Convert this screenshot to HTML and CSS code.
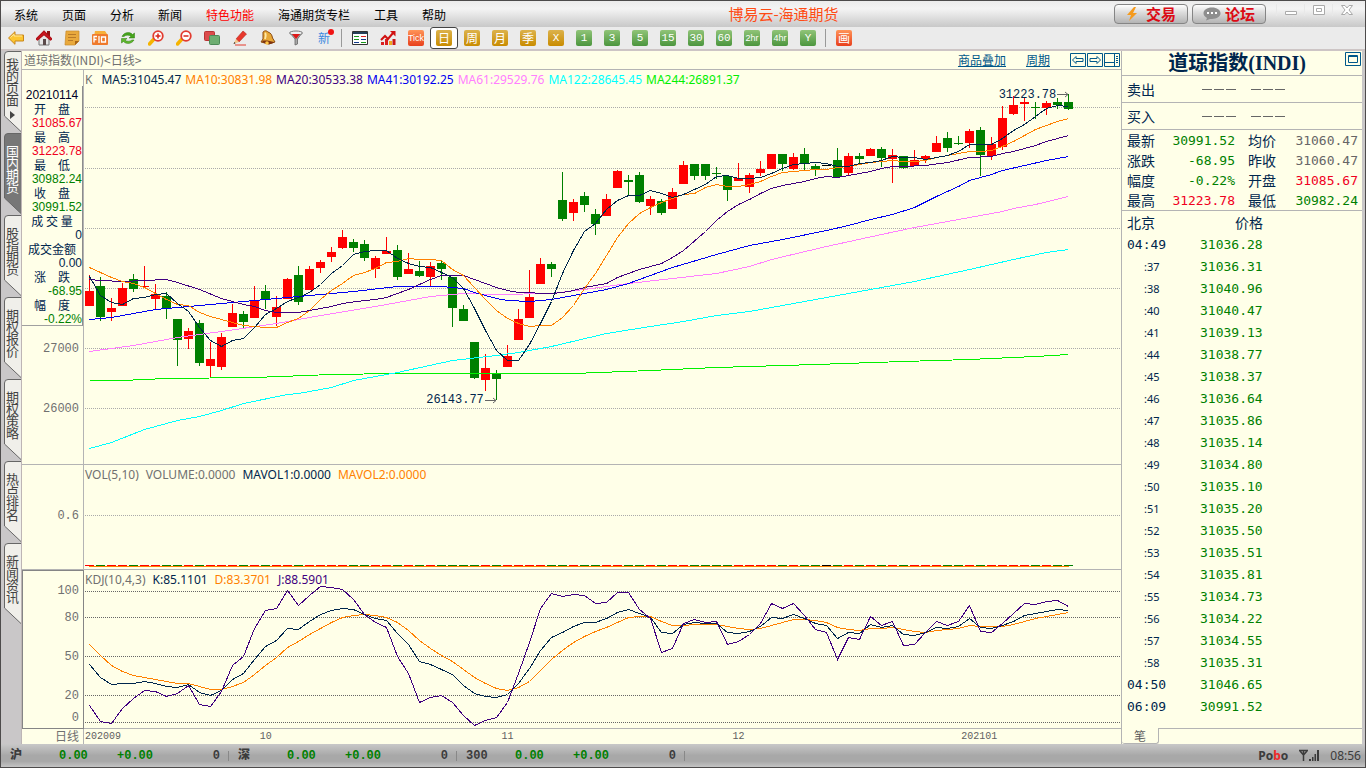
FILE: index.html
```html
<!DOCTYPE html>
<html lang="zh-CN">
<head>
<meta charset="utf-8">
<title>博易云-海通期货</title>
<link rel="stylesheet" href="styles.css">
</head>
<body>
<div class="window">
  <header class="titlebar">
    <nav class="menu">
      <button>系统</button><button>页面</button><button>分析</button><button>新闻</button><button class="hot">特色功能</button><button>海通期货专栏</button><button>工具</button><button>帮助</button>
    </nav>
    <h1 class="app-title">博易云-海通期货</h1>
    <div class="title-actions">
      <button class="pill"><svg width="12" height="16" viewBox="0 0 12 16"><path d="M8 1 1 9h4L3 15l8-8H7l3-6z" fill="#f59a1c"/></svg>交易</button>
      <button class="pill"><svg width="18" height="14" viewBox="0 0 18 14"><path d="M9 .5C4 .5.5 3 .5 6.300c0 2 1.500 3.700 3.500 4.700L3 13.500l4-1.600h2c5 0 8.500-2.300 8.500-5.600S14 .5 9 .5z" fill="#8e8e8e"/><path d="M4 5h2v2H4zM8 5h2v2H8zM12 5h2v2h-2z" fill="#fff"/></svg>论坛</button>
      <div class="win-buttons">
        <button aria-label="最小化"><svg width="14" height="12" viewBox="0 0 14 12"><path d="M1.500 7.500h11v3h-11z" fill="#fff" stroke="#aaa"/></svg></button>
        <button aria-label="最大化"><svg width="14" height="12" viewBox="0 0 14 12"><path d="M1.500 1.500h11v9h-11zM4.500 4.500h5v3h-5z" fill="#fff" stroke="#aaa"/></svg></button>
        <button aria-label="关闭"><svg width="14" height="12" viewBox="0 0 14 12"><path d="M1.500 1.500h3.500l2 2.500 2-2.500h3.500L9 6l3.500 4.500H9L7 8l-2 2.500H1.500L5 6z" fill="#fff" stroke="#aaa"/></svg></button>
      </div>
    </div>
  </header>

  <div class="toolbar" role="toolbar">
    <button aria-label="后退"><svg class="ico" viewBox="0 0 16 16"><path d="M.5 8 7 1.700V5h8.500v6H7v3.300z" fill="#fcc631" stroke="#c9861a"/><path d="M2.500 7.500 6 4.200V6h8" stroke="#ffe89a" fill="none"/></svg></button>
    <button aria-label="首页"><svg class="ico" viewBox="0 0 16 16"><path d="M3 8v7h10V8L8 3z" fill="#e6e6e6" stroke="#777"/><path d="M11 1h3v5h-3z" fill="#8e1414"/><path d="M0 9 8 1l8 8-1.500 1L8 4.500 1.500 10z" fill="#d01820" stroke="#b01018" stroke-width="1.200"/><path d="M7 9h3v6H7z" fill="#5a4a4a"/></svg></button>
    <button aria-label="笔记"><svg class="ico" viewBox="0 0 16 16"><path d="M2 1h13v10l-4 4H1z" fill="#e9a93c" stroke="#c98a2a" stroke-width=".7"/><path d="m15 11-4 4v-4z" fill="#a86414"/><path d="M4 4.500h8M4 7.500h8M4 10.500h5" stroke="#b87a28"/></svg></button>
    <button aria-label="F10"><svg class="ico" viewBox="0 0 16 16"><path d="M3 1h10l2 3v11H3L1 12z" fill="#f7b03a"/><rect x="0" y="4" width="16" height="11" rx="1" fill="#ef7a2c"/><path d="M2 12.500v-6h3M2 9.500h2.500M7 6v7M9.500 7h4v5h-4z" stroke="#fff" stroke-width="1.300" fill="none"/></svg></button>
    <button aria-label="刷新"><svg class="ico" viewBox="0 0 16 16"><path d="M2 6.500C4 2 10 1.500 12.500 4.500l2-1.500v5H9l2-1.800C9 4.500 5.500 5 4 6.500z" fill="#46a51c" stroke="#2c7a10" stroke-width=".5"/><path d="M14 10c-2 4-8 4.500-10.500 1.500l-2 1.500V8.500H7l-2 1.800c2 1.500 5.500 1 7-.3z" fill="#5fb82c" stroke="#2c7a10" stroke-width=".5"/></svg></button>
    <button aria-label="放大"><svg class="ico" viewBox="0 0 16 16"><path d="m6 9-4.500 5" stroke="#f5b400" stroke-width="3.500" stroke-linecap="round"/><circle cx="10" cy="6" r="4.800" fill="#fff" stroke="#e23c30" stroke-width="1.800"/><path d="M7.500 6h5M10 3.500v5" stroke="#d8261c" stroke-width="1.500"/></svg></button>
    <button aria-label="缩小"><svg class="ico" viewBox="0 0 16 16"><path d="m6 9-4.500 5" stroke="#f5b400" stroke-width="3.500" stroke-linecap="round"/><circle cx="10" cy="6" r="4.800" fill="#fff" stroke="#e23c30" stroke-width="1.800"/><path d="M7.500 6h5" stroke="#d8261c" stroke-width="1.500"/></svg></button>
    <button aria-label="叠加"><svg class="ico" viewBox="0 0 16 16"><rect x=".5" y="1.500" width="10" height="9" rx="1" fill="#dc4b4b" stroke="#b83434"/><rect x="5.500" y="5.500" width="10" height="9" rx="1" fill="#6eae72" stroke="#4d8a58"/></svg></button>
    <button aria-label="画线"><svg class="ico" viewBox="0 0 16 16"><path d="M4 9 11 1l3.500 3L7 12z" fill="#e8382c" stroke="#b3261c" stroke-width=".6"/><path d="M4 9 1.500 14 7 12z" fill="#f3c68c"/><path d="m2.500 12-1 2 2-.8z" fill="#222"/><path d="M3 15h11" stroke="#e43a2c"/></svg></button>
    <button aria-label="预警"><svg class="ico" viewBox="0 0 16 16"><path d="M3 2c2-2 4-1 5 0 3 1 4 3 4.500 6l2.500 4-6 2-8-2 2-3z" fill="#e8a838" stroke="#8a4a10"/><path d="M5 3c1 1 1 3 0 6" stroke="#ffe9a8" fill="none" stroke-width="1.800"/><path d="M2 11c3-1 8 0 12 1-2 3-10 3-12-1z" fill="#7e3410"/><circle cx="7" cy="13" r="1.800" fill="#ffc84a"/></svg></button>
    <button aria-label="筛选"><svg class="ico" viewBox="0 0 16 16"><path d="M2 3 7 9v6l2.500-1V9L14 3z" fill="#a8a8a8" stroke="#666" stroke-width=".8"/><ellipse cx="8" cy="3" rx="6.500" ry="2" fill="#eee" stroke="#777"/><path d="M4 4h8L8 9z" fill="#e01818"/></svg></button>
    <button class="new-btn">新<span class="dot"></span></button>
    <span class="sep"></span>
    <button aria-label="报价表"><svg class="ico" viewBox="0 0 16 16"><path d="M.5 1.500h15v13H.5z" fill="#fff" stroke="#333"/><path d="M1 2h14v2H1z" fill="#274058"/><path d="M2 6.500h5M2 9.500h5M9 12.500h5" stroke="#1a9a1a"/><path d="M9 6.500h5" stroke="#d22"/><path d="M9 9.500h5M2 12.500h5" stroke="#113a8a"/></svg></button>
    <button aria-label="走势图"><svg class="ico" viewBox="0 0 16 16"><path d="M1 12h3v3H1zM5 9h3v6H5z" fill="#da2020"/><path d="M9 11h3v4H9z" fill="#f0a820"/><path d="M12.500 9h3v6h-3z" fill="#c81818"/><path d="m1 10 4-4 3 3 5-6" stroke="#d01010" stroke-width="2" fill="none"/><path d="M10 1h5.500v5.500z" fill="#d01010"/></svg></button>
    <button class="t"><span class="tile red">Tick</span></button>
    <button class="t on"><span class="tile gold big">日</span></button>
    <button class="t"><span class="tile gold big">周</span></button>
    <button class="t"><span class="tile gold big">月</span></button>
    <button class="t"><span class="tile gold big">季</span></button>
    <button class="t"><span class="tile gold">X</span></button>
    <button class="t"><span class="tile green">1</span></button>
    <button class="t"><span class="tile green">3</span></button>
    <button class="t"><span class="tile green">5</span></button>
    <button class="t"><span class="tile green">15</span></button>
    <button class="t"><span class="tile green">30</span></button>
    <button class="t"><span class="tile green">60</span></button>
    <button class="t"><span class="tile green small">2hr</span></button>
    <button class="t"><span class="tile green small">4hr</span></button>
    <button class="t"><span class="tile green">Y</span></button>
    <span class="sep"></span>
    <button class="t"><span class="tile red big">画</span></button>
  </div>

  <main class="main">
    <nav class="side">
      <button class="first"><svg viewBox="0 0 17 82"><path d="M18 .5H4Q.5 .5 .5 4V65L17.500 81"/></svg><span>我的页面</span><i></i></button>
      <button class="active"><svg viewBox="0 0 17 82"><path d="M18 .5H4Q.5 .5 .5 4V65L17.500 81"/></svg><span>国内期货</span></button>
      <button><svg viewBox="0 0 17 82"><path d="M18 .5H4Q.5 .5 .5 4V65L17.500 81"/></svg><span>股指期货</span></button>
      <button><svg viewBox="0 0 17 82"><path d="M18 .5H4Q.5 .5 .5 4V65L17.500 81"/></svg><span>期权报价</span></button>
      <button><svg viewBox="0 0 17 82"><path d="M18 .5H4Q.5 .5 .5 4V65L17.500 81"/></svg><span>期权策略</span></button>
      <button><svg viewBox="0 0 17 82"><path d="M18 .5H4Q.5 .5 .5 4V65L17.500 81"/></svg><span>热点排名</span></button>
      <button><svg viewBox="0 0 17 82"><path d="M18 .5H4Q.5 .5 .5 4V65L17.500 81"/></svg><span>新闻资讯</span></button>
    </nav>

    <section class="charts">
      <div class="chart-head">
        <span>道琼指数(INDI)&lt;日线&gt;</span>
        <div class="head-links">
          <a href="#">商品叠加</a><a href="#">周期</a>
          <div class="head-icons">
            <button aria-label="左移"><svg width="16" height="14" viewBox="0 0 16 14"><path d="M.5.5h15v13H.5zM2.500 7 6 3.500v2h7v3H6v2z"/></svg></button>
            <button aria-label="右移"><svg width="16" height="14" viewBox="0 0 16 14"><path d="M.5.5h15v13H.5zM13.500 7 10 3.500v2H3v3h7v2z"/></svg></button>
            <button aria-label="布局"><svg width="16" height="14" viewBox="0 0 16 14"><path d="M.5.5h15v13H.5zM10.500 1v12M1 9.500h9M12 3.500h2M12 5.500h2M12 7.500h2M12 9.500h2"/></svg></button>
          </div>
        </div>
      </div>

      <div class="axis k-axis">
        <dl class="day">
          <dt class="date">20210114</dt>
          <dt>开　盘</dt><dd class="up">31085.67</dd>
          <dt>最　高</dt><dd class="up">31223.78</dd>
          <dt>最　低</dt><dd class="down">30982.24</dd>
          <dt>收　盘</dt><dd class="down">30991.52</dd>
          <dt>成 交 量</dt><dd>0</dd>
          <dt>成交金额</dt><dd>0.00</dd>
          <dt>涨　跌</dt><dd class="down">-68.95</dd>
          <dt>幅　度</dt><dd class="down">-0.22%</dd>
        </dl>
        <span class="tick t27000">27000</span><span class="tick t26000">26000</span>
      </div>
      <div class="pane">
        <svg id="k-chart" class="plot" viewBox="84 70 1037 394" preserveAspectRatio="none"></svg>
        <p class="legend"><span class="c-gray k">K</span><span class="c-ma5">MA5:31045.47</span><span class="c-ma10">MA10:30831.98</span><span class="c-ma20">MA20:30533.38</span><span class="c-ma41">MA41:30192.25</span><span class="c-ma61">MA61:29529.76</span><span class="c-ma122">MA122:28645.45</span><span class="c-ma244">MA244:26891.37</span></p>
        <span class="mark high">31223.78<svg width="12" height="7" viewBox="0 0 12 7"><path d="M0 3.500h11M8 1l3 2.500L8 6"/></svg></span>
        <span class="mark low">26143.77<svg width="12" height="7" viewBox="0 0 12 7"><path d="M0 3.500h11M8 1l3 2.500L8 6"/></svg></span>
      </div>

      <div class="axis vol-axis"><span class="tick t06">0.6</span></div>
      <div class="pane">
        <svg id="vol-chart" class="plot" viewBox="84 465 1037 104" preserveAspectRatio="none"></svg>
        <p class="legend wide"><span class="c-gray">VOL(5,10)</span><span class="c-gray">VOLUME:0.0000</span><span class="c-ma5">MAVOL1:0.0000</span><span class="c-ma10">MAVOL2:0.0000</span></p>
      </div>

      <div class="axis kdj-axis"><span class="tick t100">100</span><span class="tick t80">80</span><span class="tick t50">50</span><span class="tick t20">20</span><span class="tick t0">0</span></div>
      <div class="pane">
        <svg id="kdj-chart" class="plot" viewBox="84 570 1037 158" preserveAspectRatio="none"></svg>
        <p class="legend wide"><span class="c-gray">KDJ(10,4,3)</span><span class="c-ma5">K:85.1101</span><span class="c-ma10">D:83.3701</span><span class="c-ma20">J:88.5901</span></p>
      </div>

      <div class="axis foot-axis">日线</div>
      <div class="dates"><span>202009</span><span>10</span><span>11</span><span>12</span><span>202101</span></div>
    </section>

    <aside class="quote">
      <div class="quote-title"><h2>道琼指数(INDI)</h2><button aria-label="最大化面板"><svg width="16" height="14" viewBox="0 0 16 14"><path d="M.5.5h15v13H.5zM3.500 3.500h9v7h-9zM3.500 4.500h9"/></svg></button></div>
      <div class="order"><span>卖出</span><span class="dashes"><i></i><i></i><i></i></span><span class="dashes"><i></i><i></i><i></i></span></div>
      <div class="order"><span>买入</span><span class="dashes"><i></i><i></i><i></i></span><span class="dashes"><i></i><i></i><i></i></span></div>
      <table class="stats">
        <tr><th>最新</th><td class="down">30991.52</td><th>均价</th><td>31060.47</td></tr>
        <tr><th>涨跌</th><td class="down">-68.95</td><th>昨收</th><td>31060.47</td></tr>
        <tr><th>幅度</th><td class="down">-0.22%</td><th>开盘</th><td class="up">31085.67</td></tr>
        <tr><th>最高</th><td class="up">31223.78</td><th>最低</th><td class="down">30982.24</td></tr>
      </table>
      <table class="ticks">
        <thead><tr><th>北京</th><th class="price-head">价格</th></tr></thead>
        <tbody>
          <tr><td>04:49</td><td>31036.28</td></tr>
          <tr><td class="s">:37</td><td>31036.31</td></tr>
          <tr><td class="s">:38</td><td>31040.96</td></tr>
          <tr><td class="s">:40</td><td>31040.47</td></tr>
          <tr><td class="s">:41</td><td>31039.13</td></tr>
          <tr><td class="s">:44</td><td>31038.77</td></tr>
          <tr><td class="s">:45</td><td>31038.37</td></tr>
          <tr><td class="s">:46</td><td>31036.64</td></tr>
          <tr><td class="s">:47</td><td>31035.86</td></tr>
          <tr><td class="s">:48</td><td>31035.14</td></tr>
          <tr><td class="s">:49</td><td>31034.80</td></tr>
          <tr><td class="s">:50</td><td>31035.10</td></tr>
          <tr><td class="s">:51</td><td>31035.20</td></tr>
          <tr><td class="s">:52</td><td>31035.50</td></tr>
          <tr><td class="s">:53</td><td>31035.51</td></tr>
          <tr><td class="s">:54</td><td>31035.81</td></tr>
          <tr><td class="s">:55</td><td>31034.73</td></tr>
          <tr><td class="s">:56</td><td>31034.22</td></tr>
          <tr><td class="s">:57</td><td>31034.55</td></tr>
          <tr><td class="s">:58</td><td>31035.31</td></tr>
          <tr><td>04:50</td><td>31046.65</td></tr>
          <tr><td>06:09</td><td>30991.52</td></tr>
        </tbody>
      </table>
      <div class="quote-tabs"><button>笔</button><span></span></div>
    </aside>
  </main>

  <footer class="status">
    <div class="index"><b>沪</b><span class="down">0.00</span><span class="down">+0.00</span><span>0</span></div>
    <div class="index"><b>深</b><span class="down">0.00</span><span class="down">+0.00</span><span>0</span></div>
    <div class="index"><b>300</b><span class="down">0.00</span><span class="down">+0.00</span><span>0</span></div>
    <div class="tray">
      <span class="brand">Po<em>b</em>o</span>
      <svg width="22" height="14" viewBox="0 0 22 14"><path d="M1 1.500h9M2 2l3.500 4L9 2M5.500 1v11" fill="none" stroke="#3c3c3c" stroke-width="1.500"/><path d="M11 10h2v2h-2zM14 8h1.500v4H14zM16.500 5H18v7h-1.500zM19 1h2v11h-2z" fill="#3c3c3c"/></svg>
      <time>08:56</time>
    </div>
  </footer>
</div>
<script src="charts.js"></script>
</body>
</html>
```
FILE: styles.css
```css
* { box-sizing: border-box; }
body { margin: 0; font: 12px/14px "Noto Sans CJK SC", sans-serif; color: #00264d; background: #fffee8; }
button { margin: 0; padding: 0; border: 0; background: none; font: inherit; color: inherit; }
p, h1, h2, dl, dd { margin: 0; }
a { color: #00588a; text-decoration: underline; }

.window { display: flex; flex-direction: column; min-height: 100vh; border: 1px solid #4d4b4b; background: #c9c7c8; }
.up { color: #f0001e; }
.down { color: #008000; }

.titlebar { display: grid; grid-template-columns: 1fr auto 1fr; height: 26px; padding-left: 13px; background: linear-gradient(#ececec, #f4f4f4 30%, #c8c8c8); color: #000; }
.menu { display: flex; gap: 24px; align-items: center; padding-top: 2px; white-space: nowrap; }
.menu .hot { color: #f00; }
.app-title { align-self: center; padding-left: 188px; font-size: 15px; line-height: 20px; font-weight: 400; color: #ff4b14; white-space: nowrap; }
.title-actions { display: flex; justify-content: flex-end; gap: 4px; padding: 3px 5px 0 0; align-items: flex-start; }
.pill { display: flex; align-items: center; justify-content: center; gap: 8px; width: 74px; height: 20px; border: 1px solid #858585; border-radius: 4px; background: linear-gradient(#fff, #ddd 40%, #b4b4b4); color: #dc0a14; font-size: 15px; font-weight: 700; }
.pill svg { flex: none; }
.pill:nth-child(2) { gap: 4px; }
.win-buttons { display: flex; padding-left: 6px; }
.win-buttons button { width: 28px; height: 12px; border-left: 1px solid #e8e8e8; }

.toolbar { display: flex; height: 24px; padding-left: 1px; border-bottom: 2px solid #cdc5c5; background: #ebebeb; }
.toolbar button { display: flex; align-items: center; justify-content: center; width: 28px; height: 22px; flex: none; }
.toolbar .sep { width: 1px; height: 18px; margin: 2px 4px 0 3px; background: #999; }
.ico { width: 16px; height: 16px; }
.new-btn { position: relative; color: #3c8ae0; }
.dot { position: absolute; top: 2px; right: 4px; width: 6px; height: 6px; border-radius: 50%; background: #f01414; }
.toolbar .on { border: 1px solid #444; border-radius: 3px; background: #fff; }
.tile { display: flex; align-items: center; justify-content: center; width: 16px; height: 16px; border-radius: 2px; color: #fff; font: 11px/16px "Liberation Mono", monospace; }
.tile.big { font: 12px/16px "Noto Sans CJK SC", sans-serif; }
.tile.small { font: 9px/16px "Liberation Sans", sans-serif; }
.gold { background: linear-gradient(#dcb24c, #c98c00); }
.green { background: linear-gradient(#90c478, #4c963e); }
.red { background: linear-gradient(#ff9458, #e8401c); font: 9px/16px "Liberation Sans", sans-serif; }

.main { flex: 1; display: grid; grid-template-columns: 21px minmax(0, 1fr) 241px; padding-right: 3px; }

.side { display: flex; flex-direction: column; padding-left: 3px; border-right: 1px solid #bdb5b5; color: #444; }
.side button { position: relative; display: flex; flex-direction: column; align-items: center; height: 82px; padding-top: 12px; }
.side svg { position: absolute; left: 0; top: 0; width: 17px; height: 82px; fill: #f0efea; stroke: #666; }
.side span { position: relative; width: 13px; line-height: 12px; font-size: 13px; word-break: break-all; }
.side .first { padding-top: 7px; }
.side i { position: relative; margin-top: 5px; border: 4px solid transparent; border-left: 5px solid #444; border-right: 0; }
.side .active { color: #fff; }
.side .active svg { fill: #777; }

.charts { display: grid; grid-template-columns: 62px minmax(0, 1fr); grid-template-rows: 19px minmax(0, 395fr) minmax(0, 105fr) minmax(0, 159fr) 15px; background: #ffffe8; }
.chart-head { grid-column: 1 / 3; display: flex; justify-content: space-between; align-items: center; padding: 0 1px 0 2px; border-bottom: 1px solid #b4b4b4; color: #707070; }
.head-links { display: flex; gap: 20px; align-items: center; }
.head-icons { display: flex; gap: 1px; }
.head-icons button, .quote-title button { display: flex; }
.head-icons svg, .quote-title svg { fill: none; stroke: #00588a; }

.axis { position: relative; border-right: 1px solid #b4b4b4; border-bottom: 1px solid #b4b4b4; color: #707070; }
.pane { position: relative; border-bottom: 1px solid #b4b4b4; }
.plot { display: block; position: absolute; inset: 0; width: 100%; height: 100%; shape-rendering: crispEdges; }
.day { margin-top: 16px; padding-top: 2px; height: 240px; border-right: 1px solid #8c8c8c; border-bottom: 1px solid #a0a0a0; color: #00264d; text-align: center; }
.day dt, .day dd { height: 14px; }
.day dd { text-align: right; font: 12px/14px "Liberation Sans", sans-serif; }
.day dd:not(.up, .down) { color: #00264d; }
.day .date { color: #000028; font: 12px/14px "Liberation Sans", sans-serif; }
.tick { position: absolute; right: 4px; margin-top: -6px; font: 12px/14px "Liberation Mono", monospace; }
.t27000 { top: 70.500%; }
.t26000 { top: 85.800%; }
.t06 { top: 48%; }
.t100 { top: 12%; }
.t80 { top: 29%; }
.t50 { top: 54%; }
.t20 { top: 79%; }
.t0 { top: 93%; }
.kdj-axis { border: 1px solid #858585; }
.kdj-axis .tick { right: 4px; }

.legend { position: relative; display: flex; gap: 4px; padding: 3px 0 0 1px; font: 12px/14px "Noto Sans", sans-serif; white-space: nowrap; }
.legend.wide { gap: 7px; }
.legend .k { padding-right: 5px; }
.c-gray { color: #707070; }
.c-ma5 { color: #00264d; }
.c-ma10 { color: #ff8000; }
.c-ma20 { color: #400080; }
.c-ma41 { color: #0000f0; }
.c-ma61 { color: #ff80ff; }
.c-ma122 { color: #00ffff; }
.c-ma244 { color: #00f000; }
.mark { position: absolute; display: flex; align-items: center; gap: 1px; font: 12px/14px "Liberation Mono", monospace; }
.mark svg { fill: none; stroke: #666; }
.mark.high { left: 88.200%; top: 4.500%; }
.mark.low { left: 33%; top: 82%; }
.plot rect { stroke: none; }
.plot line, .plot polyline { vector-effect: non-scaling-stroke; fill: none; stroke-width: 1; }
.foot-axis { padding-right: 4px; text-align: right; border-bottom: 0; }
.dates { display: grid; grid-template-columns: 175fr 242fr 231fr 229fr 160fr; padding-left: 1px; font: 10px/15px "Liberation Mono", monospace; color: #606060; }

.quote { display: flex; flex-direction: column; border-left: 1px solid #b4b4b4; background: #ffffe8; font-size: 14px; }
.quote-title { display: flex; justify-content: flex-end; align-items: flex-start; gap: 39px; height: 25px; padding: 1px 1px 0 0; border-bottom: 1px solid #b4b4b4; }
.quote-title h2 { font: 700 20px/22px "Liberation Serif", "Noto Sans CJK SC", serif; white-space: nowrap; }
.order { display: flex; align-items: center; height: 27px; padding-left: 5px; border-bottom: 1px solid #b4b4b4; }
.dashes { display: flex; gap: 2px; margin-left: 47px; }
.dashes + .dashes { margin-left: 15px; }
.dashes i { width: 10px; height: 1px; background: #666; }
table { border-collapse: collapse; }
th { padding: 0; font-weight: 400; text-align: left; }
td { padding: 2px 0 0; font: 13px/18px "DejaVu Sans Mono", monospace; }
.stats { width: 100%; border-bottom: 1px solid #b4b4b4; table-layout: fixed; }
.stats tr { height: 20px; }
.stats th { width: 41px; padding-left: 5px; line-height: 20px; }
.stats th:nth-child(3) { width: 49px; padding-left: 13px; }
.stats td { text-align: right; }
.stats td:nth-child(2) { width: 72px; }
.stats td:last-child { padding-right: 4px; }
.stats td:not(.up, .down) { color: #666; }
.ticks { width: 100%; table-layout: fixed; }
.ticks tr { height: 22px; }
.ticks th { line-height: 22px; padding-left: 5px; width: 78px; }
.ticks .price-head { width: auto; padding-left: 35px; }
.ticks td { padding-left: 5px; line-height: 20px; }
.ticks td:last-child { padding-left: 0; color: #008000; }
.ticks .s { padding-left: 22px; font: 11px/20px "Noto Sans", sans-serif; }
.quote-tabs { display: flex; height: 16px; margin-top: auto; color: #606060; }
.quote-tabs button { width: 37px; height: 16px; border-right: 1px solid #b4b4b4; border-bottom: 1px solid #b4b4b4; border-radius: 0 0 3px 3px; font-size: 12px; }
.quote-tabs span { flex: 1; border-top: 1px solid #b4b4b4; }

.status { display: flex; height: 23px; background: linear-gradient(#c8c8c8, #a8a8a8 50%, #a8a8a8 75%, #c4c4c4); color: #3c3c3c; font: 700 12px/25px "Liberation Mono", "Noto Sans CJK SC", monospace; }
.index { position: relative; display: grid; grid-template-columns: 49px 58px 62px 1fr; width: 228px; padding: 0 9px 0 9px; flex: none; }
.index span:last-child { text-align: right; }
.index::after { content: ""; position: absolute; right: 0; top: 7px; width: 1px; height: 10px; background: #888; }
.tray { display: flex; align-items: center; gap: 10px; margin-left: auto; padding-right: 4px; font: 12px/23px "Noto Sans", sans-serif; }
.brand { font-weight: 700; }
.brand em { font-style: normal; color: #f02828; }
```
FILE: charts.js
```js
// Each bar: direction (r rise, g fall, n flat), high, body top, body bottom, low.
const bars = `r275,291,306,306 g277,286,317,321 r298,308,312,321 r283,288,306,306 g274,279,289,292 r266,286,287,287
r284,294,299,309 g292,296,309,319 g319,319,340,366 r328,331,339,349 g320,323,363,366 r342,359,366,377 r333,337,367,370
r304,313,327,327 g311,314,322,329 r286,301,318,318 g285,291,300,309 r296,307,317,326 r278,279,299,299 g266,275,302,305
r266,269,290,290 r260,262,268,273 r247,252,257,262 r230,237,248,249 g239,242,248,252 g240,244,258,261 r256,258,269,278
r237,251,254,254 g245,250,277,280 r253,269,274,274 g261,271,276,277 r262,266,277,286 g260,263,269,280 g277,277,308,327
g305,309,321,321 g342,342,378,379 r354,368,380,391 g370,374,379,400 r345,356,367,367 r309,319,340,340 r270,297,318,318
r258,264,284,284 g262,264,269,277 g172,200,219,221 r199,202,213,221 g192,196,205,212 g209,214,224,235 r194,199,216,216
r170,171,188,188 g175,180,182,196 g172,175,202,203 r196,199,206,215 g199,201,213,215 r188,192,209,209 r161,165,184,184
g164,164,176,180 g164,164,176,180 g167,173,174,179 g176,176,190,201 r163,178,181,181 r173,175,187,193 r161,169,173,176
r154,154,169,169 g154,154,164,171 r153,157,169,170 g148,154,164,170 g164,166,169,176 n165,165,166,166 g148,160,177,177
r153,156,173,175 g153,156,159,163 r148,149,156,156 g147,149,158,167 r149,155,159,183 g156,156,168,169 r150,160,166,166
r155,156,159,163 r136,143,152,152 g132,138,148,152 g136,143,144,145 r129,131,143,148 g127,130,155,176 r137,144,156,160
r106,118,147,150 r96,105,114,115 r98,102,104,121 g102,107,108,119 r101,103,108,115 g98,102,105,109 g94,102,109,110`
  .split(/\s+/).map(s => ({ dir: s[0], v: s.slice(1).split(",").map(Number) }));

const fill = { r: "#ff0000", g: "#008000", n: "#000000" };
const NAVY = "#00264d", ORANGE = "#ff8000", PURPLE = "#400080";
const barX = i => 89 + 11 * i;

// One value for every bar.
const dense = list => list.trim().split(/\s+/).map((y, i) => [i, +y]);
// "bar:value" pairs for slowly changing averages.
const sparse = list => list.trim().split(/\s+/).map(p => p.split(":").map(Number));

function add(svg, name, attrs) {
  const el = document.createElementNS("http://www.w3.org/2000/svg", name);
  for (const key in attrs) el.setAttribute(key, attrs[key]);
  svg.appendChild(el);
}
function rect(svg, x, y, width, height, color) {
  add(svg, "rect", { x, y, width, height, fill: color });
}
function grid(svg, levels, color) {
  levels.forEach(y => add(svg, "line", { x1: 85, x2: 1121, y1: y + .5, y2: y + .5, stroke: color, "stroke-dasharray": "1 1" }));
}
function curve(svg, points, color) {
  add(svg, "polyline", { points: points.map(([i, y]) => `${barX(i) + .5},${y + .5}`).join(" "), stroke: color });
}

const k = document.getElementById("k-chart");
grid(k, [107, 168, 228, 288, 348, 408], "#aaaaaa");
bars.forEach(({ dir, v: [high, top, bottom, low] }, i) => {
  rect(k, barX(i), high, 1, low - high, fill[dir]);
  rect(k, barX(i) - 4, top, 9, bottom - top, fill[dir]);
});
curve(k, sparse("0:380 3:380 7:378 15:377 22:374 28:373 37:373 44:373 51:370 57:367 66:364 74:361 80:359 86:356 89:354"), "#00f000");
curve(k, sparse("0:448 2:442 5:429 8:420 10:416 12:410 14:403 18:394 19:393 22:387 24:380 28:372 33:360 37:355 39:352 42:346 47:333 51:326 54:321 57:315 60:311 65:301 70:291 75:281 80:269 84:259 87:252 89:249"), "#00ffff");
curve(k, sparse("0:351 4:345 8:337 12:331 17:323 20:317 26:306 31:296 34:293 37:294 42:293 45:289 47:286 49:283 53:278 57:273 60:266 62:259 67:246 72:234 75:227 81:215 83:211 84:208 86:204 89:196"), "#ff80ff");
curve(k, sparse("0:319 2:317 6:309 12:303 15:300 19:296 24:291 28:286 32:286 34:288 35:292 37:298 38:300 40:301 42:299 47:289 49:283 53:267 57:254 60:245 63:239 67:230 69:225 71:219 73:214 75:207 77:196 79:186 80:180 82:174 83:170 87:160 89:156"), "#0000f0");
curve(k, sparse("0:279 1:280 3:281 5:280 7:279 8:282 10:289 12:298 14:304 15:306 16:310 17:312 19:312 20:310 21:308 22:306 23:303 25:300 26:299 27:297 29:289 31:279 32:275 34:275 35:279 36:283 37:287 38:290 39:292 42:293 43:292 44:290 45:287 47:283 48:277 50:269 52:263 53:257 54:250 56:231 57:220 58:211 59:204 60:199 61:193 62:188 63:185 65:181 66:178 67:176 68:177 69:175 71:171 72:168 73:166 74:166 76:165 78:162 80:157 82:156 83:153 84:151 86:145 87:141 89:135"), PURPLE);
curve(k, dense("267 272 277 281 283 287 293 299 304 305 312 316 319 322 325 326 327 327 322 318 310 299 290 283 275 272 268 262 261 258 259 259 260 269 275 287 299 310 318 323 326 325 325 317 305 288 273 255 237 223 213 207 202 198 194 193 187 184 186 186 184 181 176 172 171 170 169 169 167 166 164 162 161 160 161 161 160 157 155 153 151 151 150 146 141 135 129 125 121 118"), ORANGE);
curve(k, dense("276 295 302 304 298 297 294 293 303 311 327 340 346 340 338 327 314 308 301 297 292 284 273 265 254 251 250 250 258 263 266 267 272 277 288 308 330 350 360 360 344 323 301 273 250 231 223 209 200 195 195 190 193 197 194 189 184 176 175 178 178 177 173 168 164 163 162 163 166 166 163 162 160 156 157 157 159 157 155 151 144 144 144 138 130 124 116 108 105 106"), NAVY);

const vol = document.getElementById("vol-chart");
grid(vol, [515], "#aaaaaa");
bars.forEach(({ dir }, i) => rect(vol, barX(i) - 4, 565, 9, 1, fill[dir]));
rect(vol, 89, 566, 980, 1, ORANGE);

const kdj = document.getElementById("kdj-chart");
grid(kdj, [591, 617, 656, 695, 722], "#666666");
curve(kdj, dense("644 655 665 671 675 677 679 681 683 683 686 689 689 686 682 674 665 657 647 641 634 628 622 617 615 614 615 617 622 630 640 648 655 661 669 677 683 688 690 687 681 670 659 650 642 636 631 627 622 617 616 616 621 625 625 624 624 624 626 628 629 628 625 622 619 619 620 622 627 629 630 628 628 627 629 631 632 630 629 628 625 626 626 626 624 621 618 616 614 612"), ORANGE);
curve(kdj, dense("664 677 684 683 683 681 683 686 687 684 692 695 690 679 673 659 646 640 628 629 621 614 610 608 609 614 618 620 633 644 661 664 669 674 685 693 696 697 694 683 668 650 637 632 626 622 622 618 612 609 613 617 632 633 624 622 623 623 632 633 631 626 617 618 614 618 623 625 638 632 633 624 627 625 634 635 632 627 628 626 618 627 628 625 621 615 613 611 609 610"), NAVY);
curve(kdj, dense("705 721 723 708 698 690 691 696 693 685 704 706 691 665 656 628 610 608 590 605 595 586 587 589 599 614 622 627 656 673 702 697 695 702 715 725 720 717 702 673 642 608 593 596 594 595 603 602 592 592 609 618 652 648 623 619 622 621 644 641 634 623 603 608 603 615 629 632 659 637 639 616 625 621 645 644 632 621 625 621 605 631 632 623 613 603 604 601 600 606"), PURPLE);
```
